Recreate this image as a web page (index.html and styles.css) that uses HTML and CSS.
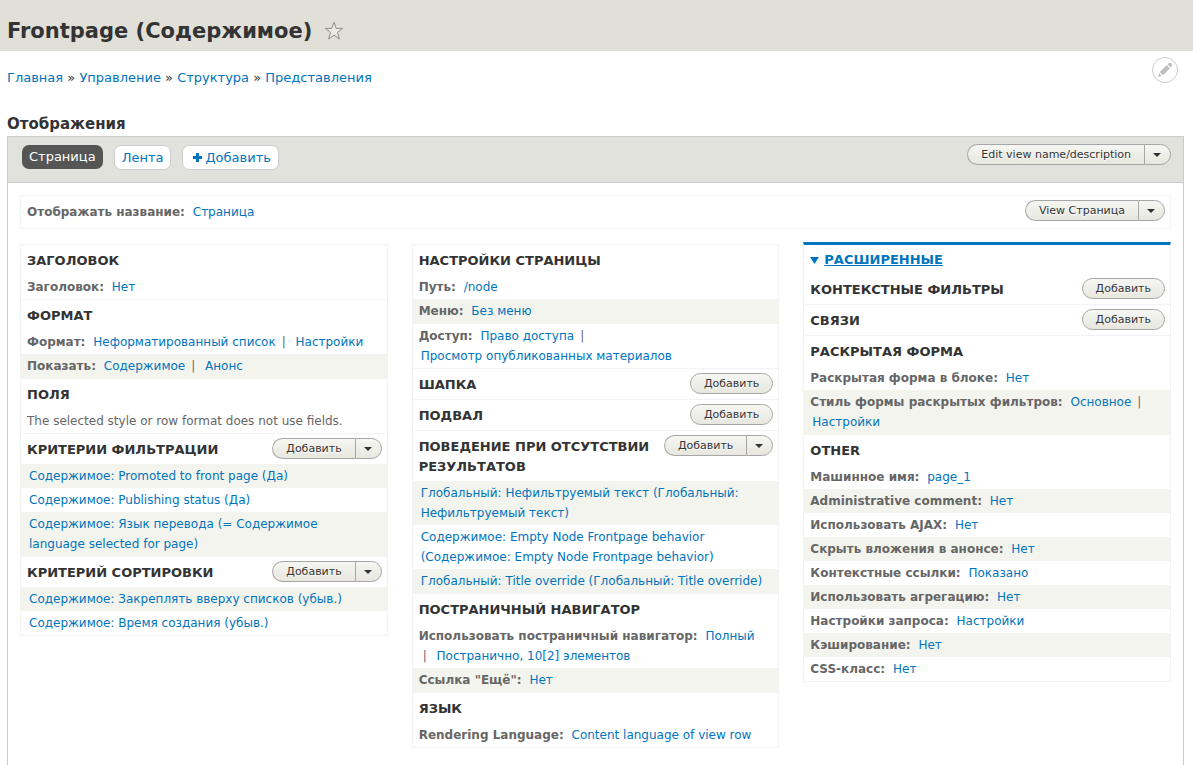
FILE: index.html
```html
<!DOCTYPE html>
<html lang="ru">
<head>
<meta charset="utf-8">
<title>Frontpage (Содержимое)</title>
<link rel="stylesheet" href="styles.css">
</head>
<body>
<header class="page-header">
  <h1 class="page-title">Frontpage (Содержимое)</h1>
  <button class="star" type="button" aria-label="Добавить в избранное">
    <svg width="20" height="20" viewBox="0 0 20 20"><path d="M10 1.3 L12.2 7.4 H18.6 L13.5 11.4 L15.4 18 L10 14.1 L4.6 18 L6.5 11.4 L1.4 7.4 H7.8 Z" fill="#e9e9e3" stroke="#8f8f83" stroke-width="1"/></svg>
  </button>
</header>

<main class="page">
  <div class="crumb-row">
    <nav class="breadcrumb"><a href="#">Главная</a> » <a href="#">Управление</a> » <a href="#">Структура</a> » <a href="#">Представления</a></nav>
    <button class="contextual" type="button" aria-label="Настроить">
      <svg width="16" height="16" viewBox="0 0 16 16" fill="#bebebe"><path d="M10.6 2.3 L11.7 1.2 Q12.8 .4 13.9 1.4 L14.6 2.1 Q15.6 3.2 14.8 4.3 L13.7 5.4 Z M9.8 3.1 L12.9 6.2 L5.7 13.4 L5.2 12 L3.9 12.1 L4 10.8 L2.6 10.3 Z M2 11.3 L4.7 14 L1 15 Z"/></svg>
    </button>
  </div>

  <h2 class="section-title">Отображения</h2>

  <section class="displays">
    <div class="display-top">
      <nav class="tabs">
        <a class="tab tab-active" href="#">Страница</a>
        <a class="tab" href="#">Лента</a>
        <a class="tab tab-add" href="#"><svg width="9" height="11" viewBox="0 0 9 11"><path d="M3 0h3v3h3v3H6v3H3V6H0V3h3z" fill="#0074bd"/></svg>Добавить</a>
      </nav>
      <div class="dropbutton"><button class="btn" type="button">Edit view name/description</button><button class="btn arrow" type="button" aria-label="Ещё действия"></button></div>
    </div>

    <div class="display-body">
      <div class="name-row">
        <div><strong class="label">Отображать название:</strong> <a class="value" href="#">Страница</a></div>
        <div class="dropbutton"><button class="btn" type="button">View Страница</button><button class="btn arrow" type="button" aria-label="Ещё действия"></button></div>
      </div>

      <div class="columns">
        <div class="column">
          <section class="bucket">
            <div class="bucket-head"><h3>Заголовок</h3></div>
            <div class="setting"><strong class="label">Заголовок:</strong> <a class="value" href="#">Нет</a></div>
          </section>
          <section class="bucket">
            <div class="bucket-head"><h3>Формат</h3></div>
            <div class="setting"><strong class="label">Формат:</strong> <a class="value" href="#">Неформатированный список</a><span class="sep">|</span> <a class="value" href="#">Настройки</a></div>
            <div class="setting shaded"><strong class="label">Показать:</strong> <a class="value" href="#">Содержимое</a><span class="sep">|</span> <a class="value" href="#">Анонс</a></div>
          </section>
          <section class="bucket">
            <div class="bucket-head"><h3>Поля</h3></div>
            <div class="setting">The selected style or row format does not use fields.</div>
          </section>
          <section class="bucket">
            <div class="bucket-head"><h3>Критерии фильтрации</h3><div class="dropbutton"><button class="btn" type="button">Добавить</button><button class="btn arrow" type="button" aria-label="Ещё действия"></button></div></div>
            <div class="setting shaded"><a class="value" href="#">Содержимое: Promoted to front page (Да)</a></div>
            <div class="setting"><a class="value" href="#">Содержимое: Publishing status (Да)</a></div>
            <div class="setting shaded"><a class="value" href="#">Содержимое: Язык перевода (= Содержимое<br>language selected for page)</a></div>
          </section>
          <section class="bucket">
            <div class="bucket-head"><h3>Критерий сортировки</h3><div class="dropbutton"><button class="btn" type="button">Добавить</button><button class="btn arrow" type="button" aria-label="Ещё действия"></button></div></div>
            <div class="setting shaded"><a class="value" href="#">Содержимое: Закреплять вверху списков (убыв.)</a></div>
            <div class="setting"><a class="value" href="#">Содержимое: Время создания (убыв.)</a></div>
          </section>
        </div>

        <div class="column">
          <section class="bucket">
            <div class="bucket-head"><h3>Настройки страницы</h3></div>
            <div class="setting"><strong class="label">Путь:</strong> <a class="value" href="#">/node</a></div>
            <div class="setting shaded"><strong class="label">Меню:</strong> <a class="value" href="#">Без меню</a></div>
          </section>
          <section class="bucket">
            <div class="setting"><strong class="label">Доступ:</strong> <a class="value" href="#">Право доступа</a><span class="sep">|</span> <a class="value" href="#">Просмотр опубликованных материалов</a></div>
          </section>
          <section class="bucket">
            <div class="bucket-head"><h3>Шапка</h3><div class="dropbutton"><button class="btn" type="button">Добавить</button></div></div>
          </section>
          <section class="bucket">
            <div class="bucket-head"><h3>Подвал</h3><div class="dropbutton"><button class="btn" type="button">Добавить</button></div></div>
          </section>
          <section class="bucket">
            <div class="bucket-head"><h3>Поведение при отсутствии результатов</h3><div class="dropbutton"><button class="btn" type="button">Добавить</button><button class="btn arrow" type="button" aria-label="Ещё действия"></button></div></div>
            <div class="setting shaded"><a class="value" href="#">Глобальный: Нефильтруемый текст (Глобальный: Нефильтруемый текст)</a></div>
            <div class="setting"><a class="value" href="#">Содержимое: Empty Node Frontpage behavior (Содержимое: Empty Node Frontpage behavior)</a></div>
            <div class="setting shaded"><a class="value" href="#">Глобальный: Title override (Глобальный: Title override)</a></div>
          </section>
          <section class="bucket">
            <div class="bucket-head"><h3>Постраничный навигатор</h3></div>
            <div class="setting"><strong class="label">Использовать постраничный навигатор:</strong> <a class="value" href="#">Полный</a><br><span class="sep">|</span> <a class="value" href="#">Постранично, 10[2] элементов</a></div>
            <div class="setting shaded"><strong class="label">Ссылка "Ещё":</strong> <a class="value" href="#">Нет</a></div>
          </section>
          <section class="bucket">
            <div class="bucket-head"><h3>Язык</h3></div>
            <div class="setting"><strong class="label">Rendering Language:</strong> <a class="value" href="#">Content language of view row</a></div>
          </section>
        </div>

        <details class="column advanced" open>
          <summary><svg width="9" height="7" viewBox="0 0 9 7"><path d="M0 0h9L4.5 7z" fill="#0074bd"/></svg><span>Расширенные</span></summary>
          <section class="bucket">
            <div class="bucket-head"><h3>Контекстные фильтры</h3><div class="dropbutton"><button class="btn" type="button">Добавить</button></div></div>
          </section>
          <section class="bucket">
            <div class="bucket-head"><h3>Связи</h3><div class="dropbutton"><button class="btn" type="button">Добавить</button></div></div>
          </section>
          <section class="bucket">
            <div class="bucket-head"><h3>Раскрытая форма</h3></div>
            <div class="setting"><strong class="label">Раскрытая форма в блоке:</strong> <a class="value" href="#">Нет</a></div>
            <div class="setting shaded"><strong class="label">Стиль формы раскрытых фильтров:</strong> <a class="value" href="#">Основное</a><span class="sep">|</span> <a class="value" href="#">Настройки</a></div>
          </section>
          <section class="bucket">
            <div class="bucket-head"><h3>Other</h3></div>
            <div class="setting"><strong class="label">Машинное имя:</strong> <a class="value" href="#">page_1</a></div>
            <div class="setting shaded"><strong class="label">Administrative comment:</strong> <a class="value" href="#">Нет</a></div>
            <div class="setting"><strong class="label">Использовать AJAX:</strong> <a class="value" href="#">Нет</a></div>
            <div class="setting shaded"><strong class="label">Скрыть вложения в анонсе:</strong> <a class="value" href="#">Нет</a></div>
            <div class="setting"><strong class="label">Контекстные ссылки:</strong> <a class="value" href="#">Показано</a></div>
            <div class="setting shaded"><strong class="label">Использовать агрегацию:</strong> <a class="value" href="#">Нет</a></div>
            <div class="setting"><strong class="label">Настройки запроса:</strong> <a class="value" href="#">Настройки</a></div>
            <div class="setting shaded"><strong class="label">Кэширование:</strong> <a class="value" href="#">Нет</a></div>
            <div class="setting"><strong class="label">CSS-класс:</strong> <a class="value" href="#">Нет</a></div>
          </section>
        </details>
      </div>
    </div>
  </section>
</main>
</body>
</html>
```
FILE: styles.css
```css
* { box-sizing: border-box; }

html { scrollbar-width: none; }

body {
  margin: 0;
  background: #fff;
  color: #333;
  font: 13px/20px "DejaVu Sans", Verdana, sans-serif;
}

a { color: #0074bd; text-decoration: none; }

button { font-family: inherit; cursor: pointer; }

h1, h2, h3 { margin: 0; }

/* Header */
.page-header {
  display: flex;
  align-items: center;
  gap: 12px;
  padding: 16px 7px 5px;
  background: #e0dfd8;
}

.page-title { font-size: 21px; line-height: 30px; }

.star { display: flex; padding: 0; border: 0; background: none; }

.page { padding: 0 9px 0 7px; }

.crumb-row {
  display: flex;
  justify-content: space-between;
  padding: 6px 6px 0 0;
}

.breadcrumb { padding-top: 11px; }

.contextual {
  display: flex;
  align-items: center;
  justify-content: center;
  width: 26px;
  height: 26px;
  padding: 0;
  border: 1px solid #ccc;
  border-radius: 50%;
  background: #fff;
}

.section-title { padding: 25px 0 0; font-size: 15px; line-height: 23px; }

/* Displays */
.displays { border: 1px solid #ccc; }

.display-top {
  display: flex;
  justify-content: space-between;
  align-items: flex-start;
  padding: 7px 12px 12px 14px;
  border-bottom: 1px solid #ccc;
  background: #e1e2dc;
}

.tabs { display: flex; align-items: flex-start; gap: 11px; padding-top: 1px; }

.tab {
  padding: 2px 7px 1px;
  border: 1px solid #ccc;
  border-radius: 7px;
  background: #fff;
}

.tab-active {
  padding: 2px 7px;
  border: 0;
  background: #555;
  color: #fff;
}

.tab-add { display: flex; align-items: center; gap: 3px; padding-left: 10px; }

.display-body { padding: 12px 12px 32px; }

.name-row {
  display: flex;
  justify-content: space-between;
  align-items: flex-start;
  padding: 4px 5px 6px 6px;
  border: 1px solid #f3f3f3;
  color: #666;
  font-size: 12px;
}

.name-row > :first-child { padding-top: 2px; }

.columns {
  display: grid;
  grid-template-columns: repeat(3, minmax(0, 1fr));
  align-items: start;
  gap: 24px;
  padding-top: 15px;
}

.column { border: 1px solid #f3f3f3; border-bottom: 0; }

.bucket { border-bottom: 1px solid #f3f3f3; }

.bucket-head {
  display: flex;
  justify-content: space-between;
  align-items: flex-start;
  padding: 0 5px 0 6px;
}

.bucket-head h3 {
  padding: 6px 0 4px;
  font-size: 13px;
  line-height: 20px;
  text-transform: uppercase;
}

.bucket-head .dropbutton { padding-top: 4px; }

.setting { padding: 2px 6px; color: #666; font-size: 12px; }

.shaded { background: #f4f4ee; }

.label { padding-right: 2px; }

.value { display: inline-block; padding: 0 2px; }

.sep { display: inline-block; padding: 0 4px; }

/* Buttons */
.dropbutton { display: flex; flex: none; }

.btn {
  height: 21px;
  padding: 0 13px;
  border: 1px solid #a6a6a6;
  border-radius: 11px;
  background: linear-gradient(#f6f6f3, #e7e7df);
  color: #333;
  font-size: 11px;
  line-height: 18px;
  text-shadow: 0 1px #fff;
}

.btn:not(:last-child) { border-right: 0; border-radius: 11px 0 0 11px; }

.arrow:last-child {
  display: flex;
  align-items: center;
  padding: 0 9px 0 8px;
  border-radius: 0 11px 11px 0;
}

.arrow::before {
  border: 4px solid transparent;
  border-top-color: #333;
  border-bottom: 0;
  content: "";
}

/* Advanced column */
.advanced { margin-top: -2px; border-top: 3px solid #0074bd; }

.advanced summary {
  display: flex;
  align-items: center;
  gap: 5px;
  padding: 5px 6px 4px;
  color: #0074bd;
  font-weight: bold;
  text-decoration: underline;
  text-transform: uppercase;
  cursor: pointer;
}
```
